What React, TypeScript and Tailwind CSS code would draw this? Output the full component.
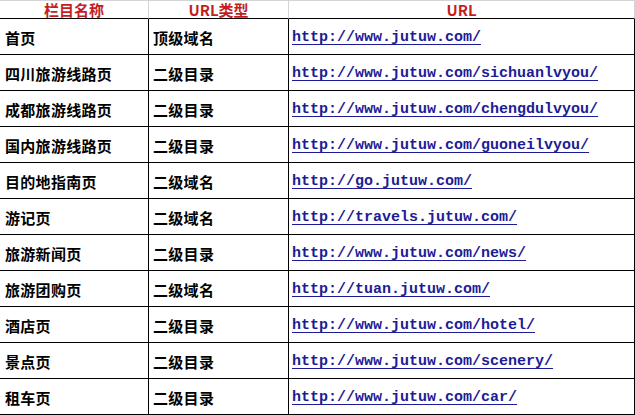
import React from "react";

const rows: [string, string, string][] = [
  ["首页", "顶级域名", "http://www.jutuw.com/"],
  ["四川旅游线路页", "二级目录", "http://www.jutuw.com/sichuanlvyou/"],
  ["成都旅游线路页", "二级目录", "http://www.jutuw.com/chengdulvyou/"],
  ["国内旅游线路页", "二级目录", "http://www.jutuw.com/guoneilvyou/"],
  ["目的地指南页", "二级域名", "http://go.jutuw.com/"],
  ["游记页", "二级域名", "http://travels.jutuw.com/"],
  ["旅游新闻页", "二级目录", "http://www.jutuw.com/news/"],
  ["旅游团购页", "二级域名", "http://tuan.jutuw.com/"],
  ["酒店页", "二级目录", "http://www.jutuw.com/hotel/"],
  ["景点页", "二级目录", "http://www.jutuw.com/scenery/"],
  ["租车页", "二级目录", "http://www.jutuw.com/car/"],
];

function HeaderCell({ children }: { children: React.ReactNode }) {
  return (
    <div className="h-[19px] border-t border-b border-r border-t-[#d4d4d4] border-r-[#d4d4d4] border-b-black flex items-center justify-center text-[15px] leading-none font-bold text-[#c41e1e] font-['Noto_Sans_CJK_SC',sans-serif]">
      {children}
    </div>
  );
}

export default function App() {
  return (
    <div className="w-[635px] h-[415px] bg-white overflow-hidden">
      <div className="grid grid-cols-[149px_140px_346px]">
        <HeaderCell>栏目名称</HeaderCell>
        <HeaderCell>URL类型</HeaderCell>
        <HeaderCell>URL</HeaderCell>
        {rows.map(([a, b, c]) => (
          <React.Fragment key={c}>
            <div className="h-[36px] border-b border-r border-black flex items-center pl-[5px] pt-[2px] text-[15px] leading-none font-bold text-black tracking-[0.3px] font-['Noto_Sans_CJK_SC',sans-serif]">
              {a}
            </div>
            <div className="h-[36px] border-b border-r border-black flex items-center pl-[4px] pt-[2px] text-[15px] leading-none font-bold text-black tracking-[0.3px] font-['Noto_Sans_CJK_SC',sans-serif]">
              {b}
            </div>
            <div className="h-[36px] border-b border-r border-black flex items-center pl-[3px] pt-[2px] text-[15px] leading-none font-bold text-[#1c1c96] underline underline-offset-[3px] font-['Liberation_Mono','DejaVu_Sans_Mono',monospace]">
              {c}
            </div>
          </React.Fragment>
        ))}
      </div>
    </div>
  );
}
